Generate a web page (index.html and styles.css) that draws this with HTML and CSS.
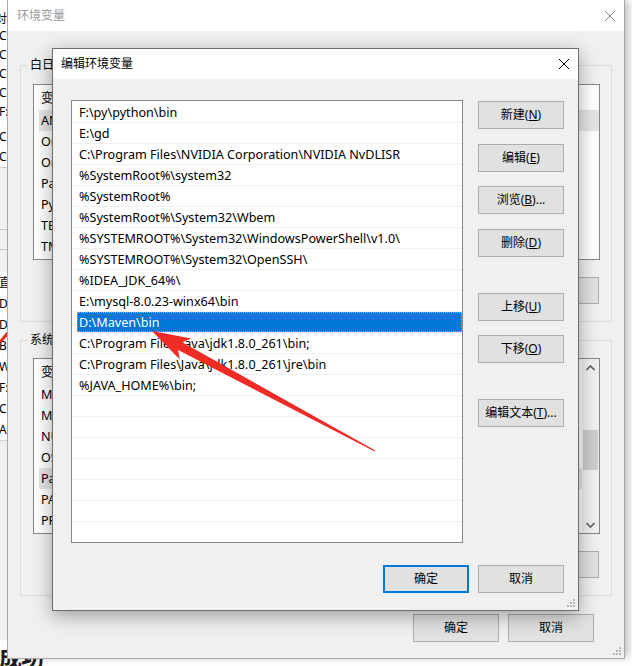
FILE: index.html
```html
<!DOCTYPE html>
<html lang="zh-CN">
<head>
<meta charset="utf-8">
<title>编辑环境变量</title>
<link rel="stylesheet" href="styles.css">
</head>
<body>
<div class="backwin">
  <div class="bw-top">
    <div class="bw-line bw-dui">对</div>
    <div class="bw-line">C:</div>
    <div class="bw-line">C:</div>
    <div class="bw-line">C:</div>
    <div class="bw-line">C:</div>
    <div class="bw-line">F:\</div>
    <div class="bw-line bw-a">C:</div>
    <div class="bw-line bw-b">C:</div>
  </div>
  <div class="bw-g1"><div class="bw-rule"></div><div class="bw-rule"></div></div>
  <div class="bw-mid">
    <div class="bw-line2">直</div>
    <div class="bw-line2">D:</div>
    <div class="bw-line2">D:</div>
    <div class="bw-line2">B</div>
    <div class="bw-line2">W</div>
    <div class="bw-line2">F:\</div>
    <div class="bw-line2">C</div>
    <div class="bw-line2">AN</div>
  </div>
  <div class="bw-g2"></div>
  <svg class="bw-red" width="12" height="20" viewBox="0 0 12 20"><line x1="12" y1="2" x2="0" y2="16" stroke="#ee2b24" stroke-width="3"/></svg>
</div>

<div class="success">成功</div>

<div class="win outer">
  <div class="titlebar">
    <span class="title inactive">环境变量</span>
    <svg class="close" width="10" height="10" viewBox="0 0 10 10"><path d="M0 0L10 10M10 0L0 10" stroke="#8c8c8c" stroke-width="1"/></svg>
  </div>
  <div class="outer-body">
    <div class="group g1">
      <span class="glabel">白日 的用户变量(U)</span>
      <div class="lv">
        <div class="lv-head"><span class="col1">变量</span><span>值</span></div>
        <div class="lv-row hl"><span class="col1">ANDROID_HOME</span><span>D:\Android\sdk</span></div>
        <div class="lv-row"><span class="col1">OneDrive</span><span>C:\Users\OneDrive</span></div>
        <div class="lv-row"><span class="col1">OneDriveConsumer</span><span>C:\Users\OneDrive</span></div>
        <div class="lv-row"><span class="col1">Path</span><span>F:\py\python\bin</span></div>
        <div class="lv-row"><span class="col1">PyCharm</span><span>E:\PyCharm\bin</span></div>
        <div class="lv-row"><span class="col1">TEMP</span><span>%USERPROFILE%\AppData\Local\Temp</span></div>
        <div class="lv-row"><span class="col1">TMP</span><span>%USERPROFILE%\AppData\Local\Temp</span></div>
      </div>
      <div class="btnrow">
        <button class="btn sm">新建(<u>N</u>)...</button>
        <button class="btn sm">编辑(<u>E</u>)...</button>
        <button class="btn sm">删除(<u>D</u>)</button>
      </div>
    </div>
    <div class="group g2">
      <span class="glabel">系统变量(S)</span>
      <div class="lv lv-scroll">
        <div class="lv-items">
          <div class="lv-head"><span class="col1">变量</span><span>值</span></div>
          <div class="lv-row"><span class="col1">MAVEN_HOME</span><span>D:\Maven</span></div>
          <div class="lv-row"><span class="col1">MYSQL_HOME</span><span>E:\mysql-8.0.23-winx64</span></div>
          <div class="lv-row"><span class="col1">NUMBER_OF_PROCESSORS</span><span>8</span></div>
          <div class="lv-row"><span class="col1">OS</span><span>Windows_NT</span></div>
          <div class="lv-row hl"><span class="col1">Path</span><span>C:\Program Files\NVIDIA Corporation</span></div>
          <div class="lv-row"><span class="col1">PATHEXT</span><span>.COM;.EXE;.BAT;.CMD</span></div>
          <div class="lv-row"><span class="col1">PROCESSOR_ARCHITECTURE</span><span>AMD64</span></div>
        </div>
        <div class="vscroll">
          <div class="sb-arrow"><svg width="9" height="6" viewBox="0 0 9 6"><polyline points="0.5,5 4.5,1 8.5,5" fill="none" stroke="#606060" stroke-width="1.6"/></svg></div>
          <div class="sb-track"><div class="sb-thumb"></div></div>
          <div class="sb-arrow"><svg width="9" height="6" viewBox="0 0 9 6"><polyline points="0.5,1 4.5,5 8.5,1" fill="none" stroke="#606060" stroke-width="1.6"/></svg></div>
        </div>
      </div>
      <div class="btnrow">
        <button class="btn sm">新建(<u>W</u>)...</button>
        <button class="btn sm">编辑(<u>I</u>)...</button>
        <button class="btn sm">删除(<u>L</u>)</button>
      </div>
    </div>
    <div class="footer outer-foot">
      <button class="btn">确定</button>
      <button class="btn">取消</button>
    </div>
  </div>
  <svg class="grip" width="9" height="9" viewBox="0 0 9 9"><g fill="#b4b4b4"><rect x="6" y="0" width="2" height="2"/><rect x="3" y="3" width="2" height="2"/><rect x="6" y="3" width="2" height="2"/><rect x="0" y="6" width="2" height="2"/><rect x="3" y="6" width="2" height="2"/><rect x="6" y="6" width="2" height="2"/></g></svg>
</div>

<div class="win dialog">
  <div class="titlebar">
    <span class="title">编辑环境变量</span>
    <svg class="close" width="10" height="10" viewBox="0 0 10 10"><path d="M0 0L10 10M10 0L0 10" stroke="#000" stroke-width="1"/></svg>
  </div>
  <div class="dlg-body">
    <div class="dlg-main">
      <div class="plist">
        <div class="prow"><span class="cell">F:\py\python\bin</span></div>
        <div class="prow"><span class="cell">E:\gd</span></div>
        <div class="prow"><span class="cell">C:\Program Files\NVIDIA Corporation\NVIDIA NvDLISR</span></div>
        <div class="prow"><span class="cell">%SystemRoot%\system32</span></div>
        <div class="prow"><span class="cell">%SystemRoot%</span></div>
        <div class="prow"><span class="cell">%SystemRoot%\System32\Wbem</span></div>
        <div class="prow"><span class="cell">%SYSTEMROOT%\System32\WindowsPowerShell\v1.0\</span></div>
        <div class="prow"><span class="cell">%SYSTEMROOT%\System32\OpenSSH\</span></div>
        <div class="prow"><span class="cell">%IDEA_JDK_64%\</span></div>
        <div class="prow"><span class="cell">E:\mysql-8.0.23-winx64\bin</span></div>
        <div class="prow"><span class="cell sel">D:\Maven\bin</span></div>
        <div class="prow"><span class="cell">C:\Program Files\Java\jdk1.8.0_261\bin;</span></div>
        <div class="prow"><span class="cell">C:\Program Files\Java\jdk1.8.0_261\jre\bin</span></div>
        <div class="prow"><span class="cell">%JAVA_HOME%\bin;</span></div>
        <div class="prow"><span class="cell"></span></div>
        <div class="prow"><span class="cell"></span></div>
        <div class="prow"><span class="cell"></span></div>
        <div class="prow"><span class="cell"></span></div>
        <div class="prow"><span class="cell"></span></div>
        <div class="prow"><span class="cell"></span></div>
        <div class="prow"><span class="cell"></span></div>
      </div>
      <div class="sidebtns">
        <button class="btn b1">新建(<u>N</u>)</button>
        <button class="btn b2">编辑(<u>E</u>)</button>
        <button class="btn b3">浏览(<u>B</u>)...</button>
        <button class="btn b4">删除(<u>D</u>)</button>
        <button class="btn b5">上移(<u>U</u>)</button>
        <button class="btn b6">下移(<u>O</u>)</button>
        <button class="btn b7">编辑文本(<u>T</u>)...</button>
      </div>
    </div>
    <div class="footer dlg-foot">
      <button class="btn default">确定</button>
      <button class="btn">取消</button>
    </div>
  </div>
  <svg class="grip" width="9" height="9" viewBox="0 0 9 9"><g fill="#b4b4b4"><rect x="6" y="0" width="2" height="2"/><rect x="3" y="3" width="2" height="2"/><rect x="6" y="3" width="2" height="2"/><rect x="0" y="6" width="2" height="2"/><rect x="3" y="6" width="2" height="2"/><rect x="6" y="6" width="2" height="2"/></g></svg>
</div>

<svg class="arrow" width="632" height="666" viewBox="0 0 632 666">
  <polygon fill="#ee2b24" points="152,331 191.2,338.4 182.3,342.2 375.3,450.5 374.7,451.5 178.1,350.1 179.8,359.6"/>
</svg>
</body>
</html>
```

FILE: styles.css
```css
* { box-sizing: border-box; margin: 0; padding: 0; }
html, body { width: 632px; height: 666px; overflow: hidden; }
body {
  position: relative;
  background: #fff;
  font-family: "Noto Sans", "Noto Sans CJK SC", sans-serif;
  font-size: 12px;
  line-height: 16px;
  color: #000;
}
button { font: inherit; color: inherit; }
u { text-decoration: underline; text-underline-offset: 1px; }

/* window behind, only a sliver visible */
.backwin {
  position: absolute; left: 0; top: 0; width: 7px; height: 666px;
  overflow: hidden; background: #fff; white-space: nowrap;
}
.bw-top { height: 168px; padding-top: 12px; border-bottom: 1px solid #d0d0d0; }
.bw-line { line-height: 19px; margin-left: -1px; }
.bw-dui { line-height: 14px; margin-left: -5px; }
.bw-a { line-height: 22px; margin-top: 5px; }
.bw-b { line-height: 18px; }
.bw-g1 { height: 104px; background: #f0f0f0; padding-top: 61px; }
.bw-rule { height: 20px; border-top: 1px solid #c8c8c8; }
.bw-mid { height: 168px; background: #fff; }
.bw-line2 { line-height: 21px; margin-left: -1px; }
.bw-g2 { height: 200px; background: #f0f0f0; border-top: 1px solid #d0d0d0; }
.bw-red { position: absolute; left: 0; top: 326px; }

.success {
  position: absolute; left: -1px; top: 645px;
  font-size: 23px; line-height: 24px; font-weight: 700; color: #1e1e1e;
  letter-spacing: -1px;
}

/* windows */
.win { position: absolute; display: flex; flex-direction: column; background: #f0f0f0; }
.titlebar {
  flex: none; background: #fff; display: flex; align-items: center;
  position: relative;
}
.title { white-space: nowrap; }
.title.inactive { color: #999; }
.close { margin-left: auto; flex: none; }
.grip { position: absolute; right: 2px; bottom: 2px; }

/* outer window */
.outer {
  left: 7px; top: -1px; width: 618px; height: 660px;
  border: 1px solid #a8a8a8;
  box-shadow: 5px 0 8px -2px rgba(0,0,0,0.28);
}
.outer .titlebar { height: 31px; padding: 0 9px 0 9px; }
.outer-body { flex: 1; padding: 34px 12px 0 12px; display: flex; flex-direction: column; }
.group {
  position: relative; border: 1px solid #dcdcdc;
  padding: 18px 11px 17px 12px;
  display: flex; flex-direction: column;
}
.g2 { margin-top: 18px; padding-top: 17px; }
.glabel {
  position: absolute; left: 7px; top: -9px; padding: 0 2px;
  background: #f0f0f0; white-space: nowrap; line-height: 16px;
}
.lv {
  height: 176px; border: 1px solid #828790; background: #fff; overflow: hidden;
  white-space: nowrap; font-size: 12.6px;
}
.lv-head { height: 25px; line-height: 26px; padding-left: 7px; display: flex; }
.lv-row { height: 21px; line-height: 22px; margin-left: 5px; padding-left: 2px; display: flex; }
.lv-row.hl { background: #e5e5e5; }
.col1 { width: 210px; flex: none; overflow: hidden; }
.lv-scroll { display: flex; }
.lv-items { flex: 1; overflow: hidden; }
.vscroll { width: 17px; flex: none; background: #f0f0f0; display: flex; flex-direction: column; }
.sb-arrow { height: 17px; display: flex; align-items: center; justify-content: center; }
.sb-track { flex: 1; padding-top: 54px; }
.sb-thumb { height: 40px; margin: 0 1px; background: #cdcdcd; }
.btnrow { display: flex; justify-content: flex-end; gap: 9px; margin-top: 17px; margin-right: 1px; }

.btn {
  width: 86px; height: 28px; flex: none;
  border: 1px solid #adadad; background: #e1e1e1;
  display: flex; align-items: center; justify-content: center;
  white-space: nowrap; line-height: 16px;
}
.btn.sm { height: 27px; }
.btn.default { border: 2px solid #0078d7; }
.footer { display: flex; justify-content: flex-end; gap: 9px; }
.outer-foot { margin-top: 18px; margin-right: 18px; }

/* dialog */
.dialog {
  left: 52px; top: 48px; width: 527px; height: 563px;
  border: 1px solid #6e6e6e;
  box-shadow: 0 5px 18px rgba(0,0,0,0.35);
}
.dialog .titlebar { height: 30px; padding: 0 9px 0 8px; }
.dlg-body { flex: 1; padding: 21px 14px 17px 18px; display: flex; flex-direction: column; }
.dlg-main { display: flex; gap: 15px; }
.plist {
  width: 392px; height: 443px; border: 1px solid #828790; background: #fff;
  overflow: hidden; white-space: nowrap; padding-top: 1px;
  font-size: 12.6px;
}
.prow { height: 21px; border-bottom: 1px solid #f0f0f0; padding-left: 5px; display: flex; }
.cell { flex: 1; padding-left: 2px; line-height: 22px; }
.cell.sel {
  background: #0078d7; color: #fff;
  outline: 1px dotted #f7a348; outline-offset: -1px;
}
.sidebtns { display: flex; flex-direction: column; padding-top: 1px; }
.b2, .b4 { margin-top: 15px; }
.b3, .b6 { margin-top: 14px; }
.b5, .b7 { margin-top: 36px; }
.dlg-foot { margin-top: 22px; }

.arrow { position: absolute; left: 0; top: 0; pointer-events: none; }
```
